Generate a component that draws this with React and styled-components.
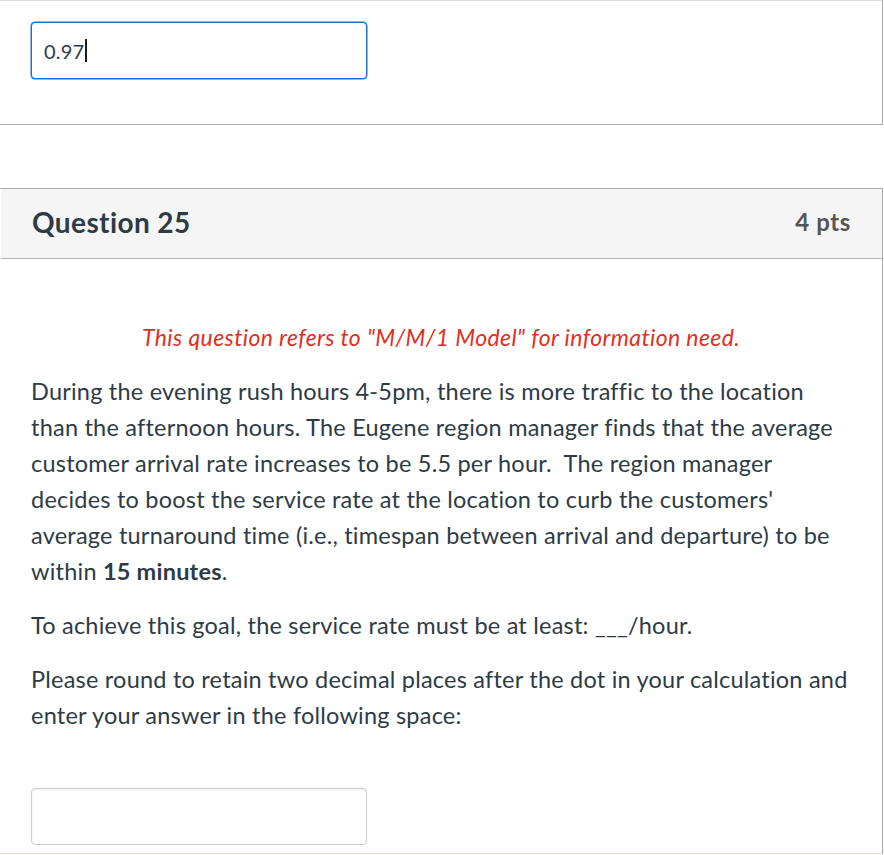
import React from 'react';
import styled, { createGlobalStyle } from 'styled-components';

const GlobalStyle = createGlobalStyle`
  html, body {
    margin: 0;
    padding: 0;
    background: #ffffff;
  }
  body {
    font-family: Lato, "Open Sans", "Liberation Sans", sans-serif;
    color: #2d3b45;
  }
`;

const Page = styled.div`
  width: 883px;
`;

const AnswerCard = styled.div`
  border-top: 1px solid #dcdcdc;
  border-right: 1px solid #aaaaaa;
  border-bottom: 1px solid #aaaaaa;
  height: 125px;
  padding: 21px 0 0 31px;
  box-sizing: border-box;
`;

const Field = styled.div`
  display: flex;
  align-items: center;
  box-sizing: border-box;
  width: 336px;
  height: 57px;
  padding: 0 12px;
  border-radius: 4px;
  background: #ffffff;
  border: 1px solid ${({ $focused }) => ($focused ? '#1f6fd0' : '#c7cdd1')};
  box-shadow: ${({ $focused }) =>
    $focused ? '0 0 0 0.5px #1f6fd0' : 'inset 0 1px 2px rgba(0, 0, 0, 0.08)'};
  font-size: 20px;
  letter-spacing: 0.2px;
  color: #2d3b45;
`;

const Caret = styled.span`
  display: inline-block;
  width: 2px;
  height: 23px;
  margin-left: 1px;
  background: #1b1b1b;
`;

const QuestionCard = styled.div`
  margin-top: 63px;
  border-top: 1px solid #aaaaaa;
  border-right: 1px solid #aaaaaa;
  border-bottom: 1px solid #e3ddd2;
`;

const Header = styled.div`
  display: flex;
  align-items: center;
  justify-content: space-between;
  height: 65px;
  padding: 0 31px 4px 31px;
  background: #f5f5f5;
  border-bottom: 1px solid #b5b5b5;
  margin-left: 1px;
`;

const Title = styled.h2`
  margin: 0;
  font-size: 28px;
  font-weight: 700;
  letter-spacing: 0.4px;
  color: #2d3b45;
`;

const Points = styled.div`
  font-size: 24px;
  font-weight: 700;
  letter-spacing: 0.6px;
  color: #555555;
`;

const Body = styled.div`
  padding: 60px 31px 8px 31px;
`;

const Para = styled.p`
  margin: 0 0 18px 0;
  font-size: 23.5px;
  letter-spacing: 0.22px;
  line-height: 36px;
  text-align: ${({ $center }) => ($center ? 'center' : 'left')};
  ${({ $note }) =>
    $note &&
    'color: #e0301e; font-style: italic; font-size: 23px; letter-spacing: 0.4px;'}
`;

const AnswerSlot = styled.div`
  margin-top: 55px;
`;

export default function App() {
  return (
    <Page>
      <GlobalStyle />
      <AnswerCard>
        <Field $focused>
          0.97
          <Caret />
        </Field>
      </AnswerCard>

      <QuestionCard>
        <Header>
          <Title>Question 25</Title>
          <Points>4 pts</Points>
        </Header>
        <Body>
          <Para $center $note>
            This question refers to "M/M/1 Model" for information need.
          </Para>
          <Para>
            During the evening rush hours 4-5pm, there is more traffic to the location
            than the afternoon hours. The Eugene region manager finds that the average
            customer arrival rate increases to be 5.5 per hour.&nbsp; The region manager
            decides to boost the service rate at the location to curb the customers'
            average turnaround time (i.e., timespan between arrival and departure) to be
            within <strong>15 minutes</strong>.
          </Para>
          <Para>To achieve this goal, the service rate must be at least: ___/hour.</Para>
          <Para>
            Please round to retain two decimal places after the dot in your calculation and
            enter your answer in the following space:
          </Para>
          <AnswerSlot>
            <Field />
          </AnswerSlot>
        </Body>
      </QuestionCard>
    </Page>
  );
}
